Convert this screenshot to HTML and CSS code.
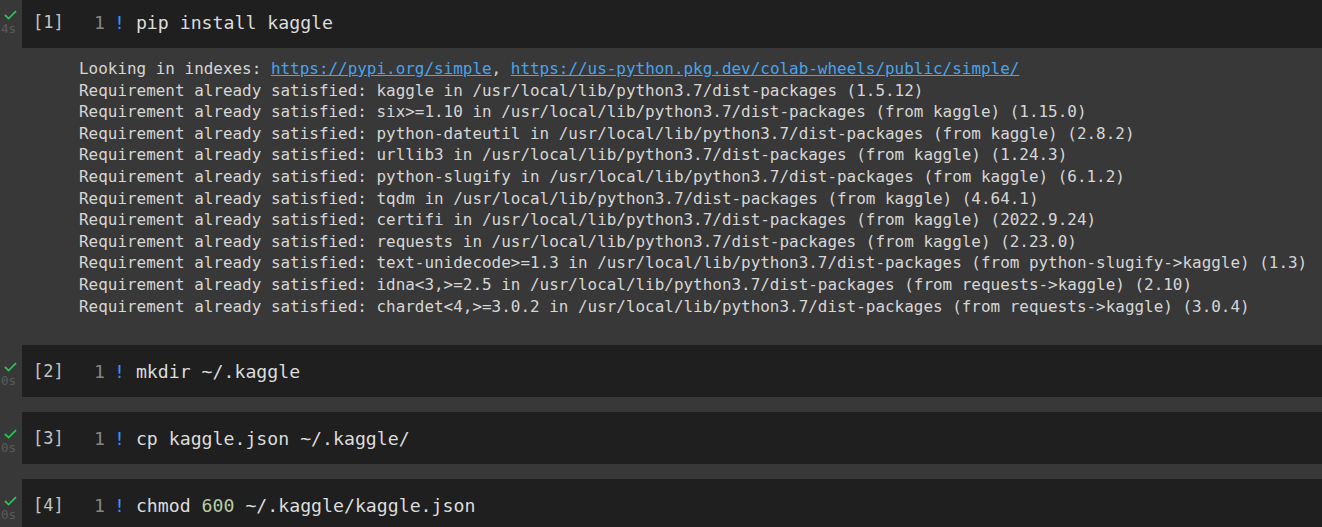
FILE: index.html
```html
<!DOCTYPE html>
<html>
<head>
<meta charset="utf-8">
<link rel="stylesheet" href="styles.css">
</head>
<body>
<div class="nb">
  <div class="cell first">
    <div class="gutter">
      <svg class="check" width="13" height="10" viewBox="0 0 13 10"><path d="M1 5 L4.6 8.6 L12 1.2" fill="none" stroke="#23c552" stroke-width="1.8"/></svg>
      <span class="time">4s</span>
    </div>
    <div class="code-row">
      <span class="count">[1]</span>
      <span class="ln">1</span>
      <span class="code"><span class="bang">!</span> pip install kaggle</span>
    </div>
  </div>
  <div class="output">
    <div class="line">Looking in indexes: <a class="link">https://pypi.org/simple</a>, <a class="link">https://us-python.pkg.dev/colab-wheels/public/simple/</a></div>
    <div class="line">Requirement already satisfied: kaggle in /usr/local/lib/python3.7/dist-packages (1.5.12)</div>
    <div class="line">Requirement already satisfied: six&gt;=1.10 in /usr/local/lib/python3.7/dist-packages (from kaggle) (1.15.0)</div>
    <div class="line">Requirement already satisfied: python-dateutil in /usr/local/lib/python3.7/dist-packages (from kaggle) (2.8.2)</div>
    <div class="line">Requirement already satisfied: urllib3 in /usr/local/lib/python3.7/dist-packages (from kaggle) (1.24.3)</div>
    <div class="line">Requirement already satisfied: python-slugify in /usr/local/lib/python3.7/dist-packages (from kaggle) (6.1.2)</div>
    <div class="line">Requirement already satisfied: tqdm in /usr/local/lib/python3.7/dist-packages (from kaggle) (4.64.1)</div>
    <div class="line">Requirement already satisfied: certifi in /usr/local/lib/python3.7/dist-packages (from kaggle) (2022.9.24)</div>
    <div class="line">Requirement already satisfied: requests in /usr/local/lib/python3.7/dist-packages (from kaggle) (2.23.0)</div>
    <div class="line">Requirement already satisfied: text-unidecode&gt;=1.3 in /usr/local/lib/python3.7/dist-packages (from python-slugify-&gt;kaggle) (1.3)</div>
    <div class="line">Requirement already satisfied: idna&lt;3,&gt;=2.5 in /usr/local/lib/python3.7/dist-packages (from requests-&gt;kaggle) (2.10)</div>
    <div class="line">Requirement already satisfied: chardet&lt;4,&gt;=3.0.2 in /usr/local/lib/python3.7/dist-packages (from requests-&gt;kaggle) (3.0.4)</div>
  </div>
  <div class="cell">
    <div class="gutter">
      <svg class="check" width="13" height="10" viewBox="0 0 13 10"><path d="M1 5 L4.6 8.6 L12 1.2" fill="none" stroke="#23c552" stroke-width="1.8"/></svg>
      <span class="time">0s</span>
    </div>
    <div class="code-row">
      <span class="count">[2]</span>
      <span class="ln">1</span>
      <span class="code"><span class="bang">!</span> mkdir ~/.kaggle</span>
    </div>
  </div>
  <div class="cell spaced">
    <div class="gutter">
      <svg class="check" width="13" height="10" viewBox="0 0 13 10"><path d="M1 5 L4.6 8.6 L12 1.2" fill="none" stroke="#23c552" stroke-width="1.8"/></svg>
      <span class="time">0s</span>
    </div>
    <div class="code-row">
      <span class="count">[3]</span>
      <span class="ln">1</span>
      <span class="code"><span class="bang">!</span> cp kaggle.json ~/.kaggle/</span>
    </div>
  </div>
  <div class="cell spaced">
    <div class="gutter">
      <svg class="check" width="13" height="10" viewBox="0 0 13 10"><path d="M1 5 L4.6 8.6 L12 1.2" fill="none" stroke="#23c552" stroke-width="1.8"/></svg>
      <span class="time">0s</span>
    </div>
    <div class="code-row">
      <span class="count">[4]</span>
      <span class="ln">1</span>
      <span class="code"><span class="bang">!</span> chmod <span class="num">600</span> ~/.kaggle/kaggle.json</span>
    </div>
  </div>
</div>
</body>
</html>
```

FILE: styles.css
```css
html, body {
  margin: 0;
  padding: 0;
  background: #383838;
  overflow: hidden;
}
body {
  width: 1322px;
  height: 527px;
  font-family: "DejaVu Sans Mono", "Liberation Mono", monospace;
}
.nb {
  display: flex;
  flex-direction: column;
  margin-top: -4px;
}
.cell {
  display: flex;
  height: 52px;
  flex: none;
}
.cell.spaced {
  margin-top: 15px;
}
.gutter {
  width: 22px;
  flex: none;
  display: flex;
  flex-direction: column;
  align-items: flex-start;
  padding-top: 17px;
  box-sizing: border-box;
}
.cell.first .gutter {
  padding-top: 14px;
}
.check {
  display: block;
  margin-left: 4px;
}
.time {
  font-family: "DejaVu Sans Mono", "Liberation Mono", monospace;
  font-size: 12.5px;
  line-height: 13px;
  color: #5a5a5a;
  margin-left: 1px;
  margin-top: 2px;
}
.code-row {
  flex: 1;
  background: #1f1f1f;
  display: flex;
  align-items: center;
}
.count {
  font-size: 17px;
  color: #c4c4c4;
  margin-left: 11px;
  width: 48px;
}
.ln {
  font-size: 18.2px;
  color: #858585;
  width: 24px;
  text-align: right;
}
.code {
  font-size: 18.2px;
  color: #dcdcdc;
  margin-left: 9px;
  white-space: pre;
}
.bang {
  color: #3794ff;
}
.num {
  color: #b5cea8;
}
.output {
  height: 297px;
  box-sizing: border-box;
  padding: 10px 0 0 79px;
  font-size: 15.95px;
  line-height: 21.6px;
  color: #d6d6d6;
  flex: none;
}
.line {
  white-space: pre;
}
.link {
  color: #4aa3ea;
  text-decoration: underline;
}
```
